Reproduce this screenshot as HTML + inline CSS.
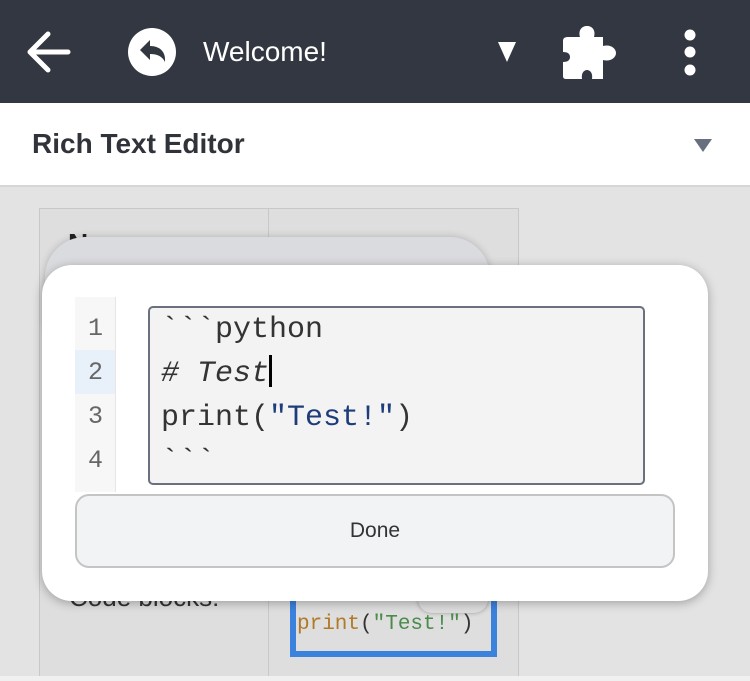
<!DOCTYPE html>
<html><head><meta charset="utf-8"><style>
*{margin:0;padding:0;box-sizing:border-box}
body{width:750px;height:681px;overflow:hidden;background:#e3e3e3;font-family:"Liberation Sans",sans-serif;position:relative}
.abs{position:absolute}
.mono{font-family:"Liberation Mono",monospace}
</style></head><body>
<div class="abs" style="left:0;top:0;width:750px;height:103px;background:#333741"></div>
<svg class="abs" style="left:0;top:0" width="750" height="103">
<path d="M68 52 H31 M48 34 L30 52 L48 70" stroke="#fff" stroke-width="5" fill="none" stroke-linecap="round" stroke-linejoin="round"/>
<circle cx="152" cy="52" r="24" fill="#fff"/>
<path d="M140 50 L150 40 L150 46 C160 46 166 52 165 62 C162 56 157 54 150 54 L150 60 Z" fill="#333741"/>
<path d="M498 42 L516 42 L507 62 Z" fill="#fff"/>
<path d="M575 37 L580 37 C578 30 582 26 587 26 C592 26 596 30 594 37 L603 37 L603 46 C610 44 616 48 616 53 C616 58 610 62 603 60 L603 79 L592 79 C593 73 590 70 587 70 C584 70 581 73 582 79 L566 79 C563 79 563 77 563 75 L563 62 C568 62 570 60 570 57 C570 54 568 52 563 52 L563 41 C563 38 565 37 568 37 Z" fill="#fff"/>
<circle cx="690" cy="35" r="5.5" fill="#fff"/><circle cx="690" cy="52" r="5.5" fill="#fff"/><circle cx="690" cy="70" r="5.5" fill="#fff"/>
</svg>
<div class="abs" style="left:203px;top:36px;color:#fff;font-size:28px">Welcome!</div>
<div class="abs" style="left:0;top:103px;width:750px;height:84px;background:#fff;border-bottom:2px solid #d6d6d6"></div>
<div class="abs" style="left:32px;top:128px;font-size:28px;font-weight:bold;color:#30333a">Rich Text Editor</div>
<svg class="abs" style="left:690px;top:136px" width="30" height="20"><path d="M4 3 L22 3 L13 16 Z" fill="#687080"/></svg>

<div class="abs" style="left:39px;top:208px;width:480px;height:473px;border:1px solid #c8c8c8;background:#dedede"></div>
<div class="abs" style="left:268px;top:208px;width:1px;height:473px;background:#c8c8c8"></div>
<div class="abs" style="left:68px;top:228px;font-size:28px;font-weight:bold;color:#222">N</div>
<div class="abs" style="left:45px;top:237px;width:445px;height:120px;border-radius:40px;background:#dadbde;box-shadow:0 0 8px rgba(0,0,0,.2)"></div>
<div class="abs" style="left:69px;top:582px;font-size:26px;color:#333">Code blocks!</div>
<div class="abs" style="left:290px;top:585px;width:207px;height:72px;border:6px solid #3b82dd"></div>
<div class="abs" style="left:418px;top:585px;width:70px;height:28px;border-radius:14px;background:#dcdcdc;box-shadow:0 0 4px rgba(0,0,0,.3)"></div>
<div class="abs mono" style="left:297px;top:613px;font-size:21px;color:#333"><span style="color:#b07a2a">print</span>(<span style="color:#4a8a4a">"Test!"</span>)</div>
<div class="abs" style="left:0;top:676px;width:750px;height:5px;background:#f0f0f0"></div>

<div class="abs" style="left:42px;top:265px;width:666px;height:336px;background:#fff;border-radius:30px;box-shadow:0 2px 10px rgba(0,0,0,.3)"></div>
<div class="abs" style="left:75px;top:297px;width:41px;height:195px;background:#f7f7f7;border-right:1px solid #e6e6e6"></div>
<div class="abs" style="left:75px;top:350px;width:40px;height:44px;background:#e8f0fa"></div>
<div class="abs mono" style="left:88px;top:307px;font-size:25px;line-height:44px;color:#666">1<br>2<br>3<br>4</div>
<div class="abs" style="left:148px;top:306px;width:497px;height:179px;background:#f3f3f3;border:2px solid #6a7080;border-radius:5px"></div>
<div class="abs mono" style="left:161px;top:308px;font-size:30px;line-height:44px;color:#333;white-space:pre">&#96;&#96;&#96;python
<i># Test</i><span style="display:inline-block;width:3px;height:32px;background:#000;vertical-align:-6px"></span>
print(<span style="color:#1d3d7a">"Test!"</span>)
&#96;&#96;&#96;</div>
<div class="abs" style="left:75px;top:494px;width:600px;height:74px;border:2px solid #c4c4c4;border-radius:14px;background:#f2f3f5;text-align:center;line-height:70px;font-size:21px;color:#333">Done</div>
</body></html>
